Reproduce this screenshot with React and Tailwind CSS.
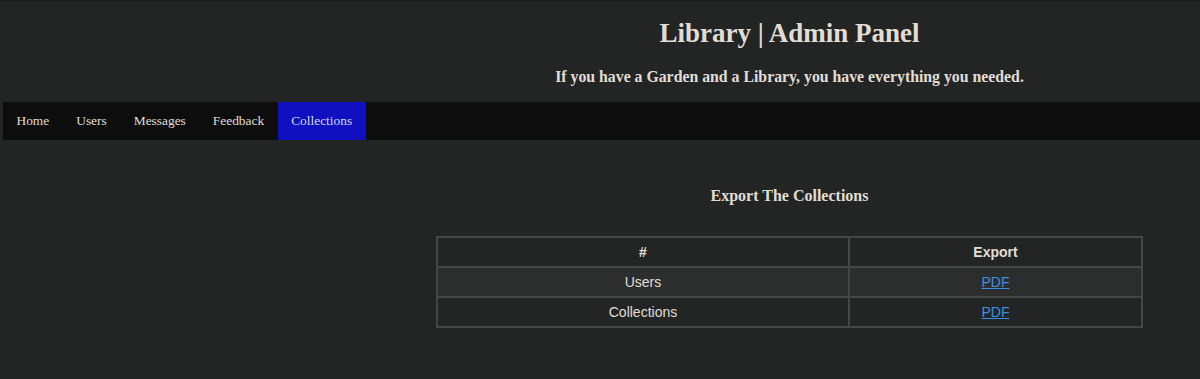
import React from 'react';

const navItems = ['Home', 'Users', 'Messages', 'Feedback', 'Collections'];

const rows = [
    { name: 'Users', link: 'PDF' },
    { name: 'Collections', link: 'PDF' },
];

const App = () => {
    return (
        <div className="min-h-[379px] bg-[#232525] text-[#e1ddd5] border-t border-[#1a1b1b] font-['Liberation_Serif',serif]">
            {/* header */}
            <div className="flex h-[101px]">
                <div className="w-[379px]"></div>
                <div className="flex-1 flex flex-col items-center">
                    <h1 className="mt-[15px] text-[27px] leading-[34px] font-bold">Library | Admin Panel</h1>
                    <p className="mt-[17px] text-[15.8px] leading-[20px] font-bold">
                        If you have a Garden and a Library, you have everything you needed.
                    </p>
                </div>
            </div>

            {/* nav */}
            <nav className="ml-[3px] h-[38px] bg-[#0d0d0d] flex">
                {navItems.map((item) => (
                    <a
                        key={item}
                        href="#"
                        className={`px-[13.5px] flex items-center text-[13.4px] ${item === 'Collections' ? 'bg-[#1010c0] text-[#d2d6f5]' : ''}`}
                    >
                        {item}
                    </a>
                ))}
            </nav>

            {/* content */}
            <div className="flex">
                <div className="w-[379px]"></div>
                <div className="flex-1 flex flex-col items-center pb-[50px]">
                    <h3 className="mt-[46px] text-[16px] leading-[20px] font-bold">Export The Collections</h3>
                    <table className="mt-[30px] w-[707px] border-collapse border-2 border-[#454747] font-['Liberation_Sans',sans-serif] text-[14px]">
                        <thead>
                            <tr className="h-[30px]">
                                <th className="border-2 border-[#454747] font-bold">#</th>
                                <th className="border-2 border-[#454747] font-bold w-[293px]">Export</th>
                            </tr>
                        </thead>
                        <tbody>
                            {rows.map((row, i) => (
                                <tr key={row.name} className={`h-[30px] ${i % 2 === 0 ? 'bg-[#2c2e2e]' : ''}`}>
                                    <td className="border-2 border-[#454747] text-center">{row.name}</td>
                                    <td className="border-2 border-[#454747] text-center">
                                        <a href="#" className="text-[#3d8fe0] underline">{row.link}</a>
                                    </td>
                                </tr>
                            ))}
                        </tbody>
                    </table>
                </div>
            </div>
        </div>
    );
};

export default App;
